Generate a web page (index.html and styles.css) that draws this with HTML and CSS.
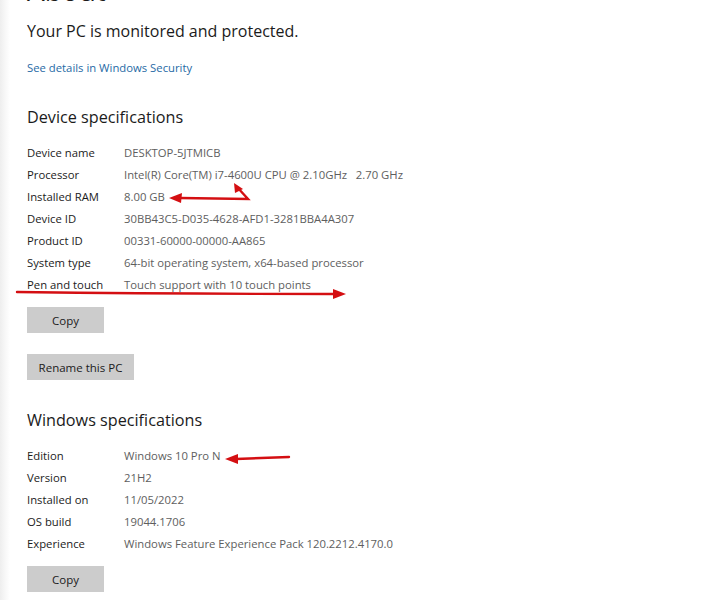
FILE: index.html
```html
<!DOCTYPE html>
<html lang="en">
<head>
<meta charset="utf-8">
<title>About</title>
<link rel="stylesheet" href="styles.css">
</head>
<body>
<div class="page">
  <h1 class="title">About</h1>
  <p class="status">Your PC is monitored and protected.</p>
  <a class="link" href="#">See details in Windows Security</a>

  <h2 class="section-title first">Device specifications</h2>
  <div class="specs">
    <span class="label">Device name</span><span class="value">DESKTOP-5JTMICB</span>
    <span class="label">Processor</span><span class="value">Intel(R) Core(TM) i7-4600U CPU @ 2.10GHz&nbsp;&nbsp;&nbsp;2.70 GHz</span>
    <span class="label">Installed RAM</span><span class="value">8.00 GB</span>
    <span class="label">Device ID</span><span class="value">30BB43C5-D035-4628-AFD1-3281BBA4A307</span>
    <span class="label">Product ID</span><span class="value">00331-60000-00000-AA865</span>
    <span class="label">System type</span><span class="value">64-bit operating system, x64-based processor</span>
    <span class="label">Pen and touch</span><span class="value">Touch support with 10 touch points</span>
  </div>
  <button class="btn copy">Copy</button>
  <button class="btn rename">Rename this PC</button>

  <h2 class="section-title second">Windows specifications</h2>
  <div class="specs">
    <span class="label">Edition</span><span class="value">Windows 10 Pro N</span>
    <span class="label">Version</span><span class="value">21H2</span>
    <span class="label">Installed on</span><span class="value">11/05/2022</span>
    <span class="label">OS build</span><span class="value">19044.1706</span>
    <span class="label">Experience</span><span class="value">Windows Feature Experience Pack 120.2212.4170.0</span>
  </div>
  <button class="btn copy">Copy</button>

  <svg class="marks" width="716" height="600" viewBox="0 0 716 600" aria-hidden="true">
    <g stroke="#d40f12" stroke-width="2.4" fill="none" stroke-linecap="round">
      <path d="M180 198 L248 199 L237 187"/>
      <path d="M17 292 Q180 294 335 294"/>
      <path d="M236 459 L289 457"/>
    </g>
    <g fill="#d40f12">
      <polygon points="169,198 182,193 181,203"/>
      <polygon points="234,183 243,189 235,193"/>
      <polygon points="346,294 333,289 333,299"/>
      <polygon points="225,459 238,454 238,464"/>
    </g>
  </svg>
</div>
</body>
</html>
```
FILE: styles.css
```css
html, body {
  margin: 0;
  padding: 0;
  background: #ffffff;
}
body {
  font-family: "Open Sans", "Noto Sans", sans-serif;
  color: #1b1b1b;
}
.page {
  position: relative;
  width: 716px;
  height: 600px;
  overflow: hidden;
  box-sizing: border-box;
  padding-left: 27px;
  background: linear-gradient(to right, #eeeeee 0, #f7f7f7 5px, #ffffff 10px);
}
.title {
  margin: -25px 0 0 0;
  height: 28px;
  font-size: 28px;
  font-weight: 400;
  line-height: 30px;
}
.status {
  margin: 17px 0 0 0;
  font-size: 16px;
  line-height: 22px;
}
.link {
  display: block;
  margin-top: 18px;
  font-size: 11.3px;
  line-height: 16px;
  color: #1f6aa5;
  text-decoration: none;
}
.section-title {
  margin: 0;
  font-weight: 400;
  font-size: 16.2px;
  line-height: 24px;
}
.section-title.first {
  margin-top: 29px;
}
.section-title.second {
  margin-top: 28px;
}
.specs {
  display: grid;
  grid-template-columns: 97px auto;
  grid-auto-rows: 22px;
  margin-top: 13px;
  font-size: 11.3px;
  line-height: 22px;
}
.label {
  color: #1b1b1b;
}
.value {
  color: #5e5e5e;
  white-space: pre;
}
.btn {
  display: block;
  border: none;
  background: #cccccc;
  color: #1b1b1b;
  font-family: inherit;
  font-size: 11.5px;
  height: 26px;
  padding: 0;
}
.btn.copy {
  width: 77px;
  margin-top: 11px;
}
.btn.rename {
  width: 107px;
  margin-top: 21px;
}
.marks {
  position: absolute;
  left: 0;
  top: 0;
  pointer-events: none;
}
```
